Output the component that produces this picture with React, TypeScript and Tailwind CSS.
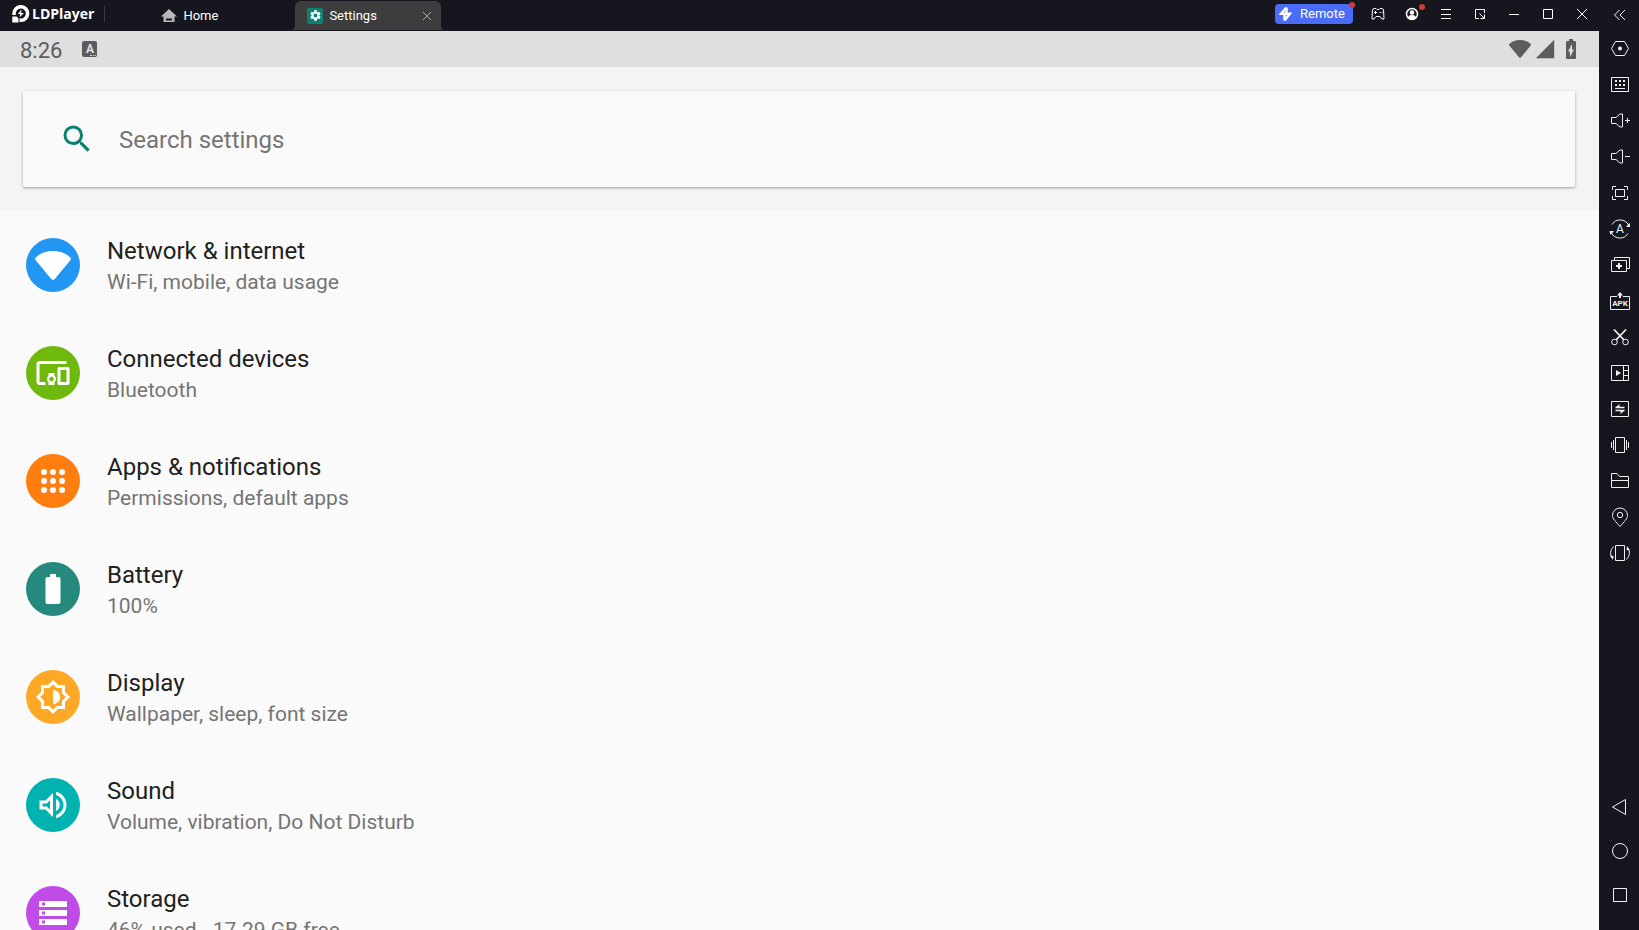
import React from 'react';
import {
  MdBatteryChargingFull,
  MdBatteryFull,
  MdDevicesOther,
  MdOutlineVolumeUp,
  MdSearch,
  MdSettings,
  MdSignalCellular4Bar,
} from 'react-icons/md';

interface Setting {
  title: string;
  summary: string;
  color: string;
  icon: React.ReactNode;
}

interface Tool {
  label: string;
  icon: React.ReactNode;
}

const WifiIcon = ({ className }: { className: string }) => (
  <svg viewBox="0 0 36 29" className={className} fill="currentColor" aria-hidden="true">
    <path d="M.7 6.6C5 2.2 11 0 18 0s13 2.2 17.3 6.6c.8.8.8 1.7.2 2.5L20 27.8c-1.2 1.5-2.8 1.5-4 0L.5 9.1C-.1 8.3-.1 7.4.7 6.6z" />
  </svg>
);

const AppsIcon = () => (
  <svg viewBox="0 0 36 36" className="size-9" fill="currentColor" aria-hidden="true">
    {[9, 18, 27].map((y) => [9, 18, 27].map((x) => <circle key={`${x}-${y}`} cx={x} cy={y} r="3" />))}
  </svg>
);

const BrightnessIcon = () => (
  <svg viewBox="0 0 24 24" className="size-9" fill="none" stroke="currentColor" strokeWidth="2" aria-hidden="true">
    <path d="M12 2.1L14.9 5H19v4.1L21.9 12 19 14.9V19h-4.1L12 21.9 9.1 19H5v-4.1L2.1 12 5 9.1V5h4.1z" />
    <path d="M12 7.3a4.7 4.7 0 0 1 0 9.4z" fill="currentColor" stroke="none" />
  </svg>
);

const StorageIcon = () => (
  <svg viewBox="0 0 28 24" className="h-6 w-7" fill="currentColor" aria-hidden="true">
    {[0, 9, 18].map((y) => (
      <path key={y} fillRule="evenodd" d={`M0 ${y}h28v6H0zM3 ${y + 1.5}v3h3v-3z`} />
    ))}
  </svg>
);

const settings: Setting[] = [
  { title: 'Network & internet', summary: 'Wi-Fi, mobile, data usage', color: 'bg-[#2196f3]', icon: <WifiIcon className="w-9" /> },
  { title: 'Connected devices', summary: 'Bluetooth', color: 'bg-[#6fb80d]', icon: <MdDevicesOther size={36} /> },
  { title: 'Apps & notifications', summary: 'Permissions, default apps', color: 'bg-[#ff7e0f]', icon: <AppsIcon /> },
  { title: 'Battery', summary: '100%', color: 'bg-[#26897e]', icon: <MdBatteryFull size={36} /> },
  { title: 'Display', summary: 'Wallpaper, sleep, font size', color: 'bg-[#ffa726]', icon: <BrightnessIcon /> },
  { title: 'Sound', summary: 'Volume, vibration, Do Not Disturb', color: 'bg-[#00b3b0]', icon: <MdOutlineVolumeUp size={36} /> },
  { title: 'Storage', summary: '46% used - 17.29 GB free', color: 'bg-[#c04be6]', icon: <StorageIcon /> },
];

const tools: Tool[] = [
  {
    label: 'Toolbar settings',
    icon: (
      <>
        <path d="M3.5 10.5l4-7h9l4 7-4 7h-9z" />
        <circle cx="12" cy="10.5" r="2" fill="currentColor" stroke="none" />
      </>
    ),
  },
  {
    label: 'Keyboard mapping',
    icon: (
      <>
        <path d="M3.5 3.5h17v14h-17zM7 14.5h10" />
        <path d="M7 7h2m2 0h2m2 0h2M7 11h2m2 0h2m2 0h2" strokeWidth="2" />
      </>
    ),
  },
  { label: 'Volume up', icon: <path d="M3.5 7.5H8L12 4h2.5v13H12l-4-3.500H3.500zM17 10.500h5M19.500 8v5" /> },
  { label: 'Volume down', icon: <path d="M3.5 7.5H8L12 4h2.5v13H12l-4-3.500H3.500zM17 10.500h5" /> },
  { label: 'Full screen', icon: <path d="M4.5 8V4.500H8M16 4.500h3.500V8M19.500 14v3.500H16M8 17.500H4.500V14M7.500 7.500h9v7h-9z" /> },
  {
    label: 'Auto rotate',
    icon: (
      <>
        <path d="M4 6.5A9.500 9.500 0 0 1 20.500 7M20 15.500A9.500 9.500 0 0 1 3.500 15" />
        <path d="M18 9h4.500l-1-4zM1.500 13H6l-3.500 4z" fill="currentColor" stroke="none" />
        <text x="12" y="15" textAnchor="middle" fontSize="12" fill="currentColor" stroke="none">A</text>
      </>
    ),
  },
  {
    label: 'Multi-instance',
    icon: (
      <>
        <path d="M3.5 6.5h15v11h-15zM6.500 6V3.500h15v11H19" />
        <path d="M8 12h6M11 9v6" strokeWidth="2" />
      </>
    ),
  },
  {
    label: 'Install APK',
    icon: (
      <>
        <path d="M9 6.500H2.500v13h19v-13H15" />
        <path d="M12 2l3 3.500h-2V8h-2V5.500H9z" fill="currentColor" stroke="none" />
        <text x="12" y="16" textAnchor="middle" fontSize="8" fontWeight="700" fill="currentColor" stroke="none">APK</text>
      </>
    ),
  },
  {
    label: 'Screenshot',
    icon: (
      <>
        <circle cx="6.5" cy="16" r="2.8" />
        <circle cx="17.5" cy="16" r="2.8" />
        <path d="M8 14L18 3.500M16 14L6 3.500" strokeWidth="1.8" />
      </>
    ),
  },
  {
    label: 'Video recorder',
    icon: (
      <>
        <path d="M3.500 3.500h17v15h-17zM15.500 3.500v15M15.500 8.500h5M15.500 13.500h5" />
        <path d="M8 8l5 3-5 3z" fill="currentColor" stroke="none" />
      </>
    ),
  },
  {
    label: 'Operation recorder',
    icon: (
      <>
        <path d="M3.500 3.500h17v15h-17z" />
        <path d="M7.500 9.500h9M7.500 12.500h9" strokeWidth="1.6" />
        <path d="M7.500 9.500l4-3.500v3.500zM16.500 12.500l-4 3.500v-3.500z" fill="currentColor" stroke="none" />
      </>
    ),
  },
  { label: 'Shake', icon: <path d="M7.500 3.500h9v15h-9zM5.500 6v10M3.500 8v6M18.500 6v10M20.500 8v6" /> },
  { label: 'Shared folder', icon: <path d="M3.500 3.500H9L11.500 6.500h9v11h-17zM3.500 10.500h17" /> },
  {
    label: 'Location',
    icon: (
      <>
        <path d="M12 20.500C7.500 15.500 4.500 12.500 4.500 9.500a7.500 7.500 0 0 1 15 0c0 3-3 6-7.500 11z" />
        <circle cx="12" cy="9" r="2.7" />
      </>
    ),
  },
  {
    label: 'Rotate',
    icon: (
      <>
        <path d="M7.500 3.500h9v15h-9zM5.500 4.500Q.5 10 4 16M18.500 17.500q5-5.500 1.500-11.500" />
        <path d="M2 13.500l3.500.5-.5 4zM22 8.500l-3.500-.5.5-4z" fill="currentColor" stroke="none" />
      </>
    ),
  },
];

const navButtons: Tool[] = [
  { label: 'Back', icon: <path d="M17.500 3.500v15l-13-7.500z" /> },
  { label: 'Home screen', icon: <circle cx="12" cy="11" r="7.500" /> },
  { label: 'Recent apps', icon: <path d="M5.500 4.500h13v13h-13z" /> },
];

const windowButtons: (Tool & { dot?: boolean })[] = [
  {
    label: 'Gamepad',
    icon: (
      <>
        <path d="M2.500 3.500L4 2.500h2l1 1h2l1-1h2l1.500 1 .5 9.500h-2l-2-2.500H6L4 13H2z" strokeLinejoin="round" />
        <path d="M4 6.500h3M5.500 5v3M9.500 6.500h1M11.500 6.500h1" />
      </>
    ),
  },
  {
    label: 'Account',
    dot: true,
    icon: (
      <>
        <circle cx="8" cy="8" r="5.500" strokeWidth="1.5" />
        <circle cx="8" cy="6.500" r="2.300" fill="currentColor" stroke="none" />
        <path d="M4 12q0-3 4-3t4 3q-4 3-8 0z" fill="currentColor" stroke="none" />
      </>
    ),
  },
  { label: 'Menu', icon: <path d="M3 3.500h10M3 8.500h10M3 12.500h10" /> },
  { label: 'Mini window', icon: <path d="M7 12.500H3.500v-9h9V7M7.500 7.500l5 5M12.500 8.500v4h-4" /> },
  { label: 'Minimize', icon: <path d="M3 8.500h10" /> },
  { label: 'Maximize', icon: <path d="M3.500 3.500h9v9h-9z" /> },
  { label: 'Close', icon: <path d="M3 3l10 10M13 3L3 13" /> },
];

const TitleBar: React.FC = () => (
  <header className="flex h-[31px] shrink-0 items-start bg-[#16161f] text-white">
    {/* Brand */}
    <div className="flex h-7 items-center gap-0.5 pl-3">
      <svg viewBox="0 0 18 18" className="h-[18px] w-[18px]" fill="none" aria-hidden="true">
        <path d="M2 10V8.500a6.800 6.800 0 1 1 7 6.800H7.500" stroke="#fff" strokeWidth="3.5" />
        <path d="M.3 11.500h4.200l2 2v4H.3z" fill="#fff" />
        <path d="M9.500 4.500L5.800 9h2.400l-.6 3.300L12 8H9.200z" fill="#fff" />
      </svg>
      <span className="font-['Open_Sans',sans-serif] text-sm font-bold">LDPlayer</span>
      <span className="ml-2 h-4 w-px bg-[#3a3a42]" />
    </div>

    {/* Tabs */}
    <nav className="flex h-[30px] items-end pl-11 text-[13px]">
      <button className="flex h-[29px] w-[146px] items-center gap-1.5 px-3">
        <svg viewBox="0 0 16 14" className="h-3.5 w-4" fill="#b9b9bd" aria-hidden="true">
          <path fillRule="evenodd" d="M8 0l8 7.500h-2.500V13h-11V7.500H0zM5 9.500v2h6v-2z" />
        </svg>
        Home
      </button>
      <div className="relative flex h-[29px] w-[146px] items-center rounded-t-md bg-[#3d3d3d] pl-3 pr-1.5">
        <svg viewBox="0 0 154 4" className="absolute -left-1 bottom-0 h-1 w-[154px]" fill="#3d3d3d" aria-hidden="true">
          <path d="M4 0v4H0q4 0 4-4zM150 0v4h4q-4 0-4-4z" />
        </svg>
        <button className="flex flex-1 items-center gap-1.5">
          <span className="grid size-4 place-items-center rounded-xs bg-[#0f8073]">
            <MdSettings size={13} />
          </span>
          Settings
        </button>
        <button aria-label="Close tab" className="grid size-4 place-items-center">
          <svg viewBox="0 0 8 8" className="size-2" stroke="#a5a5a5" aria-hidden="true">
            <path d="M0 0l8 8M8 0L0 8" />
          </svg>
        </button>
      </div>
    </nav>

    {/* Window controls */}
    <div className="ml-auto flex h-7 items-center">
      <button className="relative mr-2 flex h-5 w-[78px] items-center gap-2 rounded bg-[#4a6cf7] pl-1 text-[13px]">
        <svg viewBox="0 0 13 14" className="h-3.5 w-[13px]" fill="none" stroke="#fff" strokeWidth="2.4" aria-hidden="true">
          <path d="M7.500.5L2 6.800h8.800L5.500 13.500M7.500.5V6M5.500 13.500V8" />
        </svg>
        Remote
        <span className="absolute -right-0.5 -top-0.5 size-1.5 rounded-full bg-[#d03c3c]" />
      </button>
      {windowButtons.map((item) => (
        <button key={item.label} aria-label={item.label} className="relative grid h-7 w-[34px] place-items-center">
          <svg viewBox="0 0 16 16" className="size-4" fill="none" stroke="currentColor" aria-hidden="true">
            {item.icon}
          </svg>
          {item.dot && <span className="absolute right-1 top-1 size-1.5 rounded-full bg-[#d03c3c]" />}
        </button>
      ))}
    </div>
  </header>
);

const StatusBar: React.FC = () => (
  <div className="flex h-9 shrink-0 items-center bg-[#dfdfdf] pl-5 pr-4 text-[#5c5c5c]">
    <span className="pt-0.5 text-[22px]">8:26</span>
    <span className="relative ml-5 grid h-4 w-[15px] place-items-center rounded-xs bg-[#5c5c5c] text-xs font-bold leading-none text-[#dfdfdf]">
      A
      <span className="absolute bottom-px right-px w-1.5 border-b border-dotted border-[#dfdfdf]" />
    </span>
    <div className="ml-auto flex items-center gap-[3px]">
      <WifiIcon className="w-[22px]" />
      <MdSignalCellular4Bar size={22} />
      <MdBatteryChargingFull size={24} />
    </div>
  </div>
);

const ToolBar: React.FC = () => (
  <aside className="flex w-10 shrink-0 flex-col bg-[#16161f] text-[#f0f0f2]" aria-label="Emulator tools">
    <button aria-label="Collapse toolbar" className="grid h-[31px] place-items-center pb-0.5">
      <svg viewBox="0 0 12 12" className="size-3" fill="none" stroke="currentColor" aria-hidden="true">
        <path d="M6.500 1l-5 5 5 5M12 1L7 6l5 5" />
      </svg>
    </button>
    {tools.map((tool) => (
      <button key={tool.label} aria-label={tool.label} className="grid h-9 place-items-center">
        <svg viewBox="0 0 22 22" className="size-[22px]" fill="none" stroke="currentColor" aria-hidden="true">
          {tool.icon}
        </svg>
      </button>
    ))}
    <div className="mt-auto flex flex-col pb-[13px]">
      {navButtons.map((item) => (
        <button key={item.label} aria-label={item.label} className="grid h-11 place-items-center">
          <svg viewBox="0 0 22 22" className="size-[22px]" fill="none" stroke="currentColor" aria-hidden="true">
            {item.icon}
          </svg>
        </button>
      ))}
    </div>
  </aside>
);

const App: React.FC = () => {
  return (
    <div className="flex h-screen overflow-hidden font-[Roboto,sans-serif]">
      <div className="flex min-w-0 flex-1 flex-col bg-[#fafafa]">
        <TitleBar />
        <StatusBar />
        <main className="min-h-0 flex-1 overflow-hidden">
          {/* Search */}
          <div className="bg-[#f4f4f4] py-6 pl-[23px] pr-6">
            <label className="flex h-24 items-center gap-6 rounded-xs bg-[#fafafa] pl-9 shadow-[0_1px_3px_rgba(0,0,0,0.35)]">
              <MdSearch size={36} className="text-[#0b8071]" />
              <input
                type="text"
                aria-label="Search settings"
                placeholder="Search settings"
                className="flex-1 bg-transparent pt-0.5 text-2xl outline-none placeholder:text-[#757575]"
              />
            </label>
          </div>

          {/* Settings list */}
          <ul>
            {settings.map((item) => (
              <li key={item.title}>
                <button className="flex h-[108px] w-full items-center gap-[27px] px-[26px] text-left">
                  <span className={`grid size-[54px] place-items-center rounded-full text-white ${item.color}`}>{item.icon}</span>
                  <span className="flex flex-col pt-1">
                    <span className="text-2xl leading-[30px] text-[#212121]">{item.title}</span>
                    <span className="text-[21px] leading-8 text-[#757575]">{item.summary}</span>
                  </span>
                </button>
              </li>
            ))}
          </ul>
        </main>
      </div>
      <ToolBar />
    </div>
  );
};

export default App;
